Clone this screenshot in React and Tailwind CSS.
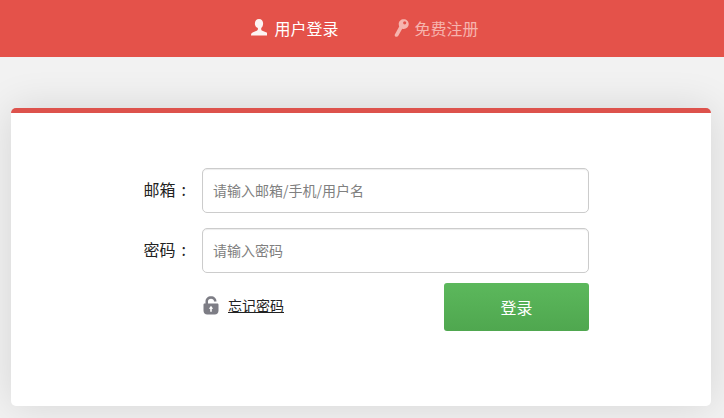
const font = { fontFamily: '"Noto Sans CJK SC", "Liberation Sans", sans-serif' };

const UserIcon = ({ className }) => (
  <svg viewBox="0.8 0.5 14.4 15.5" preserveAspectRatio="none" className={className} fill="currentColor">
    <path d="M8 0.500c2.300 0 3.700 1.700 3.700 4 0 1.700-.7 3.300-1.700 4.200v1.300c0 .6.300 1 1 1.300l3.300 1.300c1.200.5 1.900 1.100 1.900 2.900H.8c0-1.800.7-2.400 1.900-2.900L6 11.100c.7-.3 1-.7 1-1.300V8.700C5 7.800 4.300 6.200 4.300 4.500c0-2.300 1.400-4 3.700-4z" />
  </svg>
);

const KeyIcon = ({ className }) => (
  <svg viewBox="0 0 15 18" className={className} fill="currentColor">
    <path fillRule="evenodd" d="M9.700 0.300c2.900 0 5 2.100 5 4.800 0 2.800-2.200 4.900-4.900 4.900-.6 0-1.100-.1-1.600-.3L4.300 16.800c-.4.700-1 1-1.700 1-1.300 0-2.200-1-1.900-2.100L5.200 7.500C4.900 6.800 4.700 6 4.700 5.100c0-2.700 2.100-4.800 5-4.800zM10.700 2.200a1.600 1.600 0 1 0 0 3.200 1.600 1.600 0 0 0 0-3.200z" />
  </svg>
);

const LockIcon = ({ className }) => (
  <svg viewBox="0 0 16 19" className={className} fill="currentColor">
    <path d="M2.500 8V5.500C2.500 2.300 4.800.3 8 .3s5.500 2 5.500 5.200H11C11 3.700 9.800 2.700 8 2.700S5 3.700 5 5.500V8z" />
    <path fillRule="evenodd" d="M1.800 7.500h12.400c.8 0 1.300.5 1.300 1.300v6c0 2.300-1.500 3.700-3.700 3.700H4.200C2 18.500.5 17.100.5 14.800v-6c0-.8.500-1.300 1.300-1.300zM8 9.800l-2.200 2.900h1.400v3h1.600v-3h1.400z" />
  </svg>
);

const Field = ({ label, placeholder }) => (
  <div className="flex items-center">
    <label className="w-[175px] shrink-0 pb-[3px] text-right text-base text-[#222]">
      {label}
      <span className="ml-[6px]">:</span>
    </label>
    <input
      placeholder={placeholder}
      style={font}
      className="ml-[16px] h-[45px] w-[387px] rounded-[5px] border border-[#ccc] bg-white px-[10px] pb-[2px] text-sm text-[#333] shadow-[inset_0_1px_1px_rgba(0,0,0,0.075)] placeholder:text-[#808080]"
    />
  </div>
);

export default function App() {
  return (
    <div style={font} className="flex h-[418px] flex-col overflow-hidden bg-[#f2f2f2]">
      <header className="z-10 flex h-[57px] shrink-0 items-center justify-center gap-[55px] bg-[#e4524a] pb-[2px] pl-[6px] text-base">
        <a className="flex items-center gap-[7px] text-white">
          <UserIcon className="h-[17px] w-4 text-[#fdf3f2]" />
          用户登录
        </a>
        <a className="flex items-center gap-[6px] text-[#f6b4ae]">
          <KeyIcon className="h-[18px] w-[15px]" />
          免费注册
        </a>
      </header>

      <main className="ml-[11px] mt-[51px] h-[298px] w-[700px] rounded-[5px] border-t-[5px] border-[#dd524c] bg-white pt-[55px] shadow-[0_0_40px_rgba(0,0,0,0.12)]">
        <div className="flex flex-col gap-[15px]">
          <Field label="邮箱" placeholder="请输入邮箱/手机/用户名" />
          <Field label="密码" placeholder="请输入密码" />
        </div>
        <div className="ml-[191px] mt-[10px] flex w-[387px] items-start justify-between">
          <div className="flex items-center gap-[9px] pl-[1px] pt-[12px]">
            <LockIcon className="h-[19px] w-4 text-[#7d7d85]" />
            <a className="text-sm text-[#222] underline">忘记密码</a>
          </div>
          <button
            style={font}
            className="h-[48px] w-[145px] rounded-[3px] bg-gradient-to-b from-[#5cb85c] to-[#4fa74f] text-base text-white"
          >
            登录
          </button>
        </div>
      </main>
    </div>
  );
}
